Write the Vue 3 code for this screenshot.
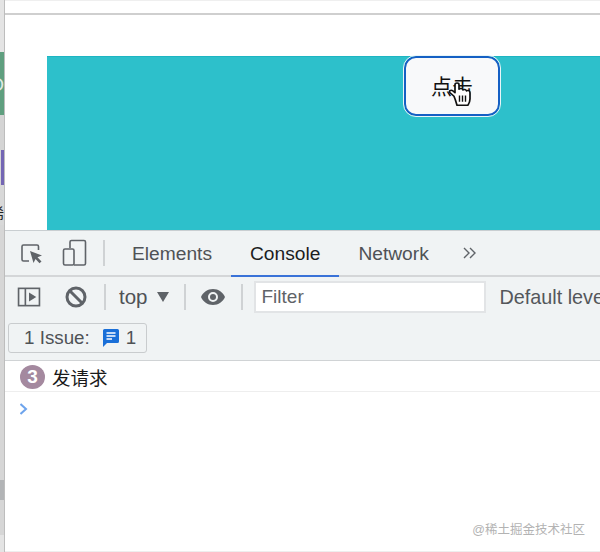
<script setup>
const sliver = [
  { h: 52, c: '#e4e4e4' },
  { h: 63, c: '#5f9f7f', label: 'O', fg: '#dfe9e4', cls: 'frag-o' },
  { h: 35, c: '#d4d4d4' },
  { h: 35, c: '#d4d4d4', cls: 'frag-purple' },
  { h: 20, c: '#d8d8d8' },
  { h: 20, c: '#d8d8d8', label: '稀', fg: '#222', cls: 'frag-t' },
  { h: 255, c: '#d6d6d6' },
  { h: 20, c: '#b2b4b6' },
  { h: 35, c: '#d6d6d6' },
  { h: 17, c: '#e4e4e4' }
]
</script>

<template>
  <div class="page">
    <div class="sliver">
      <div
        v-for="(s, i) in sliver"
        :key="i"
        class="seg"
        :class="s.cls"
        :style="{ height: s.h + 'px', background: s.c, color: s.fg }"
      ><span v-if="s.label">{{ s.label }}</span></div>
    </div>
    <div class="main">
      <div class="topstrip"></div>
      <div class="viewport">
        <div class="teal">
          <div class="btn">
            点击
            <svg class="hand" width="24" height="25" viewBox="0 0 24 28" preserveAspectRatio="none">
              <path d="M7 16 L3 12 C1.5 10.5 3.5 8 6 10 L8 12 L8 3 C8 0.5 12 0.5 12 3 L12 8 C13 7 15.5 7 16 9 C17 8 19 8 19.5 10 C20.5 9 23 9.5 23 12 L23 19 C23 22 22 24 21 26 L10 26 C9.5 24 8.5 20 7 16 Z" fill="#fff" stroke="#111" stroke-width="1.7" stroke-linejoin="round"/>
              <path d="M12.5 15 V22 M15.5 15 V22 M18.5 15 V22" stroke="#111" stroke-width="1.4" fill="none"/>
            </svg>
          </div>
        </div>
      </div>
      <div class="devtools">
        <div class="tabs">
          <svg class="ico-inspect" width="24" height="24" viewBox="0 0 24 24">
            <path d="M9 20 H3.5 A1.5 1.5 0 0 1 2 18.5 V5.5 A1.5 1.5 0 0 1 3.5 4 H17 A1.5 1.5 0 0 1 18.5 5.5 V9" fill="none" stroke="#5f6368" stroke-width="1.6"/>
            <path d="M10 10 L22 14.5 L17.5 16.3 L21.5 20.5 L19.5 22.3 L15.5 18 L13.5 22 Z" fill="#5f6368"/>
          </svg>
          <svg class="ico-device" width="26" height="28" viewBox="0 0 26 28">
            <path d="M8 9 V3 A1.5 1.5 0 0 1 9.5 1.5 H22 A1.5 1.5 0 0 1 23.5 3 V24.5 A1.5 1.5 0 0 1 22 26 H12" fill="none" stroke="#5f6368" stroke-width="1.6"/>
            <rect x="1.5" y="10" width="10.5" height="16" rx="1.5" fill="none" stroke="#5f6368" stroke-width="1.6"/>
          </svg>
          <span class="sep sep-tabs"></span>
          <span class="tab">Elements</span>
          <span class="tab active">Console</span>
          <span class="tab">Network</span>
          <svg class="ico-more" width="16" height="14" viewBox="0 0 16 14">
            <path d="M2 2 L7 7 L2 12 M8 2 L13 7 L8 12" fill="none" stroke="#5f6368" stroke-width="1.4"/>
          </svg>
        </div>
        <div class="toolbar">
          <svg class="ico-sidebar" width="24" height="20" viewBox="0 0 26 22">
            <rect x="1.5" y="1.5" width="23" height="19" fill="none" stroke="#5f6368" stroke-width="1.8"/>
            <path d="M9 1.5 V20.5" stroke="#5f6368" stroke-width="1.8"/>
            <path d="M13 6 L21 11 L13 16 Z" fill="#5f6368"/>
          </svg>
          <svg class="ico-clear" width="22" height="22" viewBox="0 0 22 22">
            <circle cx="11" cy="11" r="9" fill="none" stroke="#5f6368" stroke-width="3"/>
            <path d="M5 5 L17 17" stroke="#5f6368" stroke-width="3"/>
          </svg>
          <span class="sep sep-a"></span>
          <span class="top">top</span>
          <span class="caret"></span>
          <span class="sep sep-b"></span>
          <svg class="ico-eye" width="26" height="18" viewBox="0 0 26 18">
            <path fill-rule="evenodd" d="M13 1 C7.5 1 3 4.3 1 9 C3 13.7 7.5 17 13 17 C18.5 17 23 13.7 25 9 C23 4.3 18.5 1 13 1 Z M13 14 A5 5 0 1 1 13 4 A5 5 0 0 1 13 14 Z" fill="#5f6368"/>
            <circle cx="13" cy="9" r="3" fill="#5f6368"/>
          </svg>
          <span class="sep sep-c"></span>
          <div class="filter">Filter</div>
          <span class="levels">Default levels</span>
        </div>
        <div class="issues">
          <div class="issue-btn">
            <span>1 Issue:</span>
            <svg class="ico-msg" width="18" height="20" viewBox="0 0 18 20">
              <path d="M2.5 1 H15.5 A1.5 1.5 0 0 1 17 2.5 V13.5 A1.5 1.5 0 0 1 15.5 15 H5 L1 19 V2.5 A1.5 1.5 0 0 1 2.5 1 Z" fill="#1a6fd8"/>
              <path d="M4.5 5 H13.5 M4.5 8 H13.5 M4.5 11 H10" stroke="#fff" stroke-width="1.5"/>
            </svg>
            <span class="issue-num">1</span>
          </div>
        </div>
      </div>
      <div class="console">
        <div class="msg">
          <span class="count">3</span>
          <span class="text">发请求</span>
        </div>
        <div class="prompt">
          <svg width="10" height="12" viewBox="0 0 10 12">
            <path d="M0.5 1 L6 6 L0.5 11" fill="none" stroke="#6ea4ec" stroke-width="2"/>
          </svg>
        </div>
        <div class="watermark">@稀土掘金技术社区</div>
      </div>
    </div>
  </div>
</template>

<style scoped>
.page {
  display: flex;
  width: 600px;
  height: 552px;
  overflow: hidden;
  font-family: "Liberation Sans", "Noto Sans CJK SC", sans-serif;
  background: #fff;
}
.sliver {
  width: 4px;
  flex: none;
  border-right: 1px solid #bdbdbd;
  display: flex;
  flex-direction: column;
}
.seg {
  position: relative;
  overflow: hidden;
  flex: none;
}
.seg span {
  position: absolute;
  right: 0;
  white-space: nowrap;
}
.frag-o span {
  top: 22px;
  font-size: 19px;
  line-height: 22px;
}
.frag-t span {
  top: 0;
  font-size: 16px;
  line-height: 20px;
}
.frag-purple::after {
  content: "";
  position: absolute;
  left: 1px;
  right: 0;
  top: 0;
  bottom: 0;
  background: #7466b4;
}
.main {
  flex: 1;
  min-width: 0;
  display: flex;
  flex-direction: column;
}
.topstrip {
  height: 15px;
  flex: none;
  background: #fff;
  border-top: 1px solid #efefef;
  border-bottom: 2px solid #cfcfcf;
  box-sizing: border-box;
}
.viewport {
  height: 216px;
  flex: none;
  padding: 41px 0 0 42px;
  box-sizing: border-box;
  border-bottom: 1px solid #c9ced1;
}
.teal {
  height: 100%;
  background: #2dc0cb;
  border-top: 1px solid #1db5c2;
  box-sizing: border-box;
  padding-left: 357px;
}
.btn {
  position: relative;
  width: 96px;
  height: 60px;
  margin-top: -1px;
  box-sizing: border-box;
  border: 2px solid #1560c4;
  border-radius: 12px;
  outline: 1.5px solid #e8f6f8;
  background: #f8f9fa;
  color: #111;
  font-size: 21px;
  line-height: 57px;
  text-align: center;
}
.hand {
  position: absolute;
  left: 41px;
  top: 24px;
}
.devtools {
  background: #f0f3f4;
  flex: none;
  border-bottom: 1px solid #d0d3d5;
}
.tabs {
  height: 44px;
  display: flex;
  align-items: center;
  border-bottom: 2px solid #d4d6d8;
  box-sizing: content-box;
  position: relative;
}
.tabs > * { flex: none; }
.tabs .ico-inspect { margin-left: 15px; }
.tabs .ico-device { margin-left: 18px; }
.sep {
  display: inline-block;
  width: 2px;
  background: #cfd2d4;
  flex: none;
}
.sep-tabs { height: 26px; margin: 0 8px 0 15px; }
.tab {
  font-size: 19.2px;
  color: #4f5256;
  height: 44px;
  line-height: 46px;
  padding: 0 19px;
  box-sizing: border-box;
  position: relative;
}
.tab.active {
  color: #1c1d1f;
  border-bottom: 2px solid #3a72d8;
  height: 46px;
  margin-top: 2px;
}
.ico-more { margin-left: 14px; }
.toolbar {
  height: 43px;
  padding-bottom: 3px;
  box-sizing: border-box;
  display: flex;
  align-items: center;
  white-space: nowrap;
}
.toolbar > * { flex: none; }
.ico-sidebar { margin-left: 12px; }
.ico-clear { margin-left: 24px; }
.sep-a { height: 26px; margin-left: 17px; }
.top { font-size: 20.5px; color: #4f5256; margin-left: 13px; }
.caret {
  width: 0;
  height: 0;
  margin-left: 9px;
  border-left: 6px solid transparent;
  border-right: 6px solid transparent;
  border-top: 10px solid #5f6368;
}
.sep-b { height: 26px; margin-left: 15px; }
.ico-eye { margin-left: 14px; }
.sep-c { height: 26px; margin-left: 15px; }
.filter {
  margin-left: 11px;
  width: 232px;
  height: 32px;
  box-sizing: border-box;
  border: 2px solid #e2e4e6;
  background: #fff;
  font-size: 19px;
  line-height: 28px;
  padding-left: 6px;
  color: #5f6368;
}
.levels { font-size: 19.8px; color: #54575b; margin-left: 14px; }
.issues {
  height: 40px;
  padding-top: 3px;
  box-sizing: border-box;
}
.issue-btn {
  margin-left: 3px;
  width: 139px;
  height: 30px;
  box-sizing: border-box;
  border: 1px solid #c9ccce;
  border-radius: 3px;
  background: #f0f3f4;
  display: flex;
  align-items: center;
  padding-left: 15px;
  font-size: 18.8px;
  color: #4f5256;
}
.ico-msg { margin-left: 12px; }
.issue-num { margin-left: 6px; }
.console {
  flex: 1;
  position: relative;
  background: #fff;
  border-bottom: 1px solid #eeeeee;
}
.msg {
  height: 31px;
  padding-top: 2px;
  display: flex;
  align-items: center;
  border-bottom: 1px solid #eeeeee;
  box-sizing: border-box;
}
.count {
  margin-left: 15px;
  width: 25px;
  height: 24px;
  border-radius: 50%;
  background: #a4899f;
  color: #fff;
  font-size: 19px;
  font-weight: bold;
  line-height: 24px;
  text-align: center;
}
.text {
  margin-left: 7px;
  font-size: 18.5px;
  color: #1a1a1a;
}
.prompt {
  padding: 11px 0 0 15px;
}
.prompt svg { display: block; }
.watermark {
  position: absolute;
  right: 15px;
  bottom: 13px;
  font-size: 12.5px;
  color: #b3b3b3;
}
</style>
